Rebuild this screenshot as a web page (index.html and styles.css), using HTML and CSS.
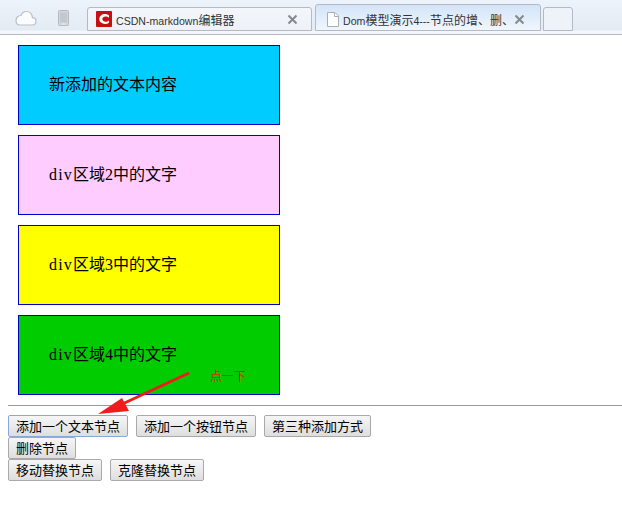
FILE: index.html
```html
<!DOCTYPE html>
<html lang="zh-CN">
  <head>
    <meta charset="UTF-8" />
    <meta name="viewport" content="width=device-width, initial-scale=1.0" />
    <title>Dom模型演示4---节点的增、删、改</title>
    <link rel="stylesheet" href="styles.css">
  </head>
  <body>
    <div class="tab-bar">
      <svg class="cloud-icon" width="22" height="16" viewBox="0 0 22 16">
        <path d="M5 15h12c2.500 0 4-1.700 4-3.800 0-2-1.500-3.500-3.500-3.600C17 4 14.500 1.500 11.500 1.500 8.700 1.500 6.700 3.200 6 5.500 3 5.500 1 7.800 1 10.500S2.700 15 5 15z" fill="#fbfcfe" stroke="#b9bfc7" stroke-width="1.200" />
      </svg>
      <svg class="phone-icon" width="11" height="16" viewBox="0 0 11 16">
        <rect x="0.500" y="0.500" width="10" height="15" rx="1" fill="#d3d7dc" stroke="#b5bac0" />
        <rect x="2" y="2.500" width="7" height="10" fill="#c3c8ce" />
        <rect x="4" y="13.500" width="3" height="1" fill="#f2f3f5" />
      </svg>
      <div class="tab tab-first">
        <svg class="tab-icon" width="16" height="16" viewBox="0 0 16 16">
          <rect width="16" height="16" rx="1" fill="#c70f12" />
          <path d="M13 4.600 C11.800 3.600 10.400 3.100 9 3.100 5.800 3.100 3.300 5.200 3.300 8.100 3.300 11 5.800 13 9 13 10.400 13 11.800 12.500 13 11.500L13 9.400C12 10.300 10.800 10.700 9.700 10.700 7.800 10.700 6.300 9.700 6.300 8.100 6.300 6.500 7.800 5.400 9.700 5.400 10.800 5.400 12 5.800 13 6.700z" fill="#fff" />
        </svg>
        <span class="tab-title"><span class="tab-latin">CSDN-markdown</span>编辑器</span>
        <svg class="tab-close" width="11" height="11" viewBox="0 0 11 11">
          <path d="M1.500 1.500L9.500 9.500M9.500 1.500L1.500 9.500" stroke="#85898e" stroke-width="2" fill="none" />
        </svg>
      </div>
      <div class="tab tab-active">
        <svg class="tab-icon" width="12" height="15" viewBox="0 0 12 15">
          <path d="M0.500 0.500H8L11.500 4V14.500H0.500z" fill="#fff" stroke="#a9afb8" />
          <path d="M7.500 0.500V4.500H11.500" fill="none" stroke="#a9afb8" />
        </svg>
        <span class="tab-title"><span class="tab-latin">Dom</span>模型演示<span class="tab-latin">4---</span>节点的增、删、</span>
        <svg class="tab-close" width="11" height="11" viewBox="0 0 11 11">
          <path d="M1.500 1.500L9.500 9.500M9.500 1.500L1.500 9.500" stroke="#85898e" stroke-width="2" fill="none" />
        </svg>
      </div>
      <div class="tab-new"></div>
    </div>

    <div class="page">
      <div class="area area-blue">新添加的文本内容</div>
      <div class="area area-pink"><span class="latin">div</span>区域2中的文字</div>
      <div class="area area-yellow"><span class="latin">div</span>区域3中的文字</div>
      <div class="area area-green"><span class="latin">div</span>区域4中的文字</div>
      <hr />
      <div class="buttons">
        <button class="focused">添加一个文本节点</button>
        <button>添加一个按钮节点</button>
        <button>第三种添加方式</button>
        <br />
        <button>删除节点</button>
        <br />
        <button>移动替换节点</button>
        <button>克隆替换节点</button>
      </div>
    </div>

    <!-- annotation drawn over the screenshot -->
    <span class="note">点一下</span>
    <svg class="arrow" width="100" height="50" viewBox="0 0 100 50">
      <path d="M91 3L20 36" stroke="#ee1c1c" stroke-width="3" fill="none" />
      <path d="M0 44L24 28L31 41z" fill="#ee1c1c" />
    </svg>
  </body>
</html>
```

FILE: styles.css
```css
html,
body {
  margin: 0;
  padding: 0;
  background-color: #fff;
  overflow: hidden;
}

body {
  position: relative;
  height: 511px;
  font-family: "Liberation Serif", "Noto Sans CJK SC", serif;
}

.tab-bar {
  display: flex;
  align-items: flex-start;
  height: 34px;
  padding-left: 15px;
  background: linear-gradient(#edf3fa 0, #e3ebf4 30px, #f3f6fb 31px);
  border-bottom: 1px solid #b3b7c0;
}

.cloud-icon {
  margin: 10px 21px 0 0;
}

.phone-icon {
  margin: 10px 18px 0 0;
}

.tab {
  display: flex;
  align-items: center;
  box-sizing: border-box;
  border: 1px solid #b3bac6;
  border-radius: 3px 3px 0 0;
  font-family: "Liberation Sans", "Noto Sans CJK SC", sans-serif;
  font-size: 12px;
  color: #333;
}

.tab-first {
  width: 225px;
  height: 24px;
  margin: 7px 3px 0 0;
  padding: 0 13px 0 8px;
  background: linear-gradient(#f3f6fb, #eef2f8);
}

.tab-active {
  width: 226px;
  height: 27px;
  margin-top: 4px;
  padding: 3px 15px 0 11px;
  background: linear-gradient(#d3e4f8, #f0f6fd);
}

.tab-icon {
  flex-shrink: 0;
  margin-right: 4px;
}

.tab-title {
  flex: 1;
  white-space: nowrap;
}

.tab-latin {
  font-size: 10.600px;
}

.tab-close {
  flex-shrink: 0;
}

.tab-new {
  width: 30px;
  height: 24px;
  margin: 7px 0 0 2px;
  box-sizing: border-box;
  border: 1px solid #b3bac6;
  border-radius: 3px 3px 0 0;
  background-color: #eef3f9;
}

.page {
  padding: 10px 0 0 8px;
}

.area {
  width: 200px;
  height: 18px;
  margin: 0 10px 10px;
  padding: 30px;
  border: 1px solid #00c;
  font-size: 16px;
  line-height: 18px;
  color: #000;
}

.area-blue {
  background-color: #0cf;
}

.area-pink {
  background-color: #fcf;
}

.area-yellow {
  background-color: #ff0;
}

.area-green {
  background-color: #0c0;
}

.latin {
  letter-spacing: 1.200px;
}

hr {
  height: 0;
  margin: 0 0 9px;
  border: none;
  border-top: 1px solid #999;
}

.buttons {
  line-height: 0;
}

button {
  box-sizing: border-box;
  height: 22px;
  margin: 0 4px 0 0;
  padding: 0 7px;
  background: linear-gradient(#f6f6f6, #dedede);
  border: 1px solid #a9a9a9;
  border-radius: 2px;
  font-family: "Noto Sans CJK SC", sans-serif;
  font-size: 13px;
  line-height: 20px;
  color: #000;
  vertical-align: top;
}

.focused {
  border-color: #8aa6e0;
}

.note {
  position: absolute;
  left: 210px;
  top: 367px;
  font-family: "Noto Sans CJK SC", sans-serif;
  font-size: 12px;
  color: #c83000;
}

.arrow {
  position: absolute;
  left: 98px;
  top: 370px;
}
```
